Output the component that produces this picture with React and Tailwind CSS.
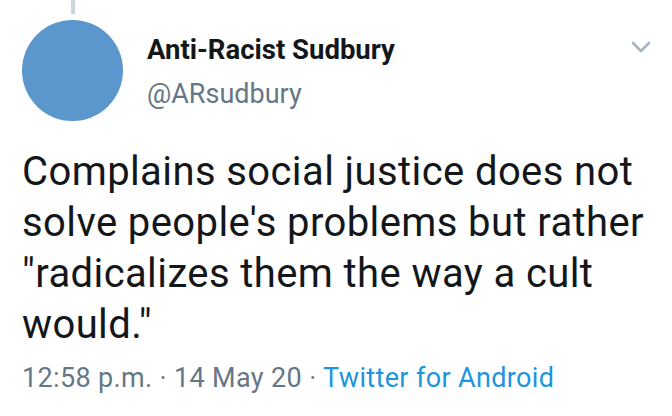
export default function App() {
  return (
    <div
      className="w-[672px] h-[416px] bg-white overflow-hidden pl-[22px] text-[#14171a]"
      style={{ fontFamily: "Roboto, 'Liberation Sans', sans-serif" }}
    >
      <div className="flex">
        <div className="flex flex-col items-center w-[101px] shrink-0">
          <div className="w-[4px] h-[14px] bg-[#ccd6dd]" />
          <div className="mt-[6px] w-[101px] h-[101px] rounded-full bg-[#5b96cd]" />
        </div>
        <div className="ml-[24px] pt-[34px] flex flex-col">
          <div className="text-[27.5px] leading-[32px] font-bold whitespace-nowrap">Anti-Racist Sudbury</div>
          <div className="mt-[12px] text-[27px] leading-[32px] text-[#657786] whitespace-nowrap">@ARsudbury</div>
        </div>
        <div className="ml-auto mr-[21px] mt-[41px] self-start">
          <svg width="20" height="13" viewBox="0 0 20 13" fill="none">
            <polyline points="2,2 10,10 18,2" stroke="#a7b3bf" strokeWidth="2.6" strokeLinecap="round" strokeLinejoin="round" />
          </svg>
        </div>
      </div>
      <div className="mt-[25px] pr-[10px] text-[40px] leading-[51px] tracking-[0.4px]">
        Complains social justice does not solve people's problems but rather "radicalizes them the way a cult would."
      </div>
      <div className="mt-[12px] text-[27px] leading-[32px] tracking-[0.35px] text-[#657786] whitespace-nowrap">
        12:58 p.m. · 14 May 20 · <span className="text-[#1d95dd]">Twitter for Android</span>
      </div>
    </div>
  );
}
